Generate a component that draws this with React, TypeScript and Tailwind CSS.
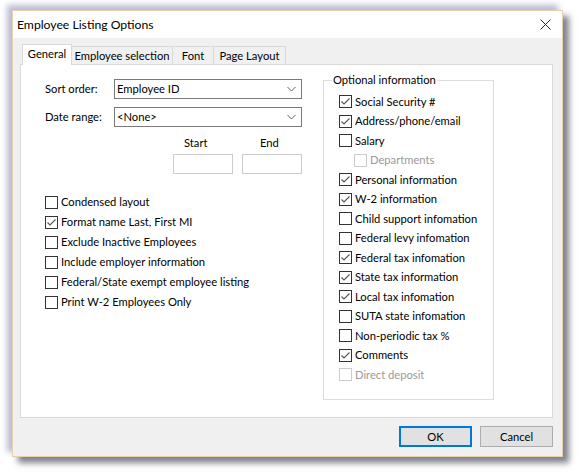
import React from "react";

const Check = ({ checked = false, disabled = false }: { checked?: boolean; disabled?: boolean }) => (
  <span
    className={
      disabled
        ? "w-[13px] h-[13px] border border-[#cccccc] bg-white flex items-center justify-center shrink-0"
        : "w-[13px] h-[13px] border border-[#333333] bg-white flex items-center justify-center shrink-0"
    }
  >
    {checked && (
      <svg width="11" height="11" viewBox="0 0 11 11">
        <path d="M1.5 5.5 L4 8 L9.5 2.5" stroke="#555555" strokeWidth="1.1" fill="none" />
      </svg>
    )}
  </span>
);

const Row = ({
  label,
  checked = false,
  disabled = false,
  indent = false,
  h = "left",
}: {
  label: string;
  checked?: boolean;
  disabled?: boolean;
  indent?: boolean;
  h?: "left" | "right";
}) => (
  <div
    className={
      (h === "left" ? "h-[20px] " : "h-[19.5px] ") +
      "flex items-center gap-[3px] text-[11.2px] leading-[14px] whitespace-nowrap " +
      (indent ? "pl-[15px] " : "") +
      (disabled ? "text-[#9a9a9a]" : "text-black")
    }
  >
    <Check checked={checked} disabled={disabled} />
    <span>{label}</span>
  </div>
);

const Chevron = () => (
  <svg width="9" height="6" viewBox="0 0 9 6">
    <path d="M0.5 1 L4.5 5 L8.5 1" stroke="#606060" strokeWidth="1" fill="none" />
  </svg>
);

const Combo = ({ value }: { value: string }) => (
  <div className="w-[188px] h-[20px] border border-[#7a7a7a] bg-white flex items-center justify-between pl-[2px] pr-[5px] text-[11.2px] leading-[14px]">
    <span>{value}</span>
    <Chevron />
  </div>
);

export default function App() {
  return (
    <div className="w-[585px] h-[475px] bg-white overflow-hidden pl-[12px] pt-[10px] font-['Lato','Liberation_Sans',sans-serif] text-black">
      <div className="w-[551px] h-[447px] border border-[#e6d0ae] flex flex-col shadow-[-5px_-5px_6px_rgba(140,140,185,0.6),6px_6px_6px_rgba(90,90,105,0.75)]">
        {/* Title bar */}
        <div className="h-[27px] bg-white flex items-center justify-between pl-[4px] pr-[11px]">
          <span className="text-[12.2px] leading-[16px]">Employee Listing Options</span>
          <svg width="11" height="11" viewBox="0 0 11 11">
            <path d="M0.5 0.5 L10.5 10.5 M10.5 0.5 L0.5 10.5" stroke="#222222" strokeWidth="1" fill="none" />
          </svg>
        </div>

        {/* Body */}
        <div className="flex-1 bg-[#f0f0f0] pl-[7px] pr-[9px] pt-[6px] flex flex-col">
          {/* Tabs */}
          <div className="h-[20px] flex items-end pl-[2px] text-[11.2px] leading-[14px] whitespace-nowrap">
            <div className="relative z-10 h-[21px] mb-[-1px] w-[50px] bg-white border-l border-t border-r border-[#d9d9d9] flex items-center justify-center pb-[2px]">
              General
            </div>
            <div className="h-[18px] w-[101px] bg-[#f0f0f0] border-t border-r border-[#d9d9d9] flex items-center justify-center">
              Employee selection
            </div>
            <div className="h-[18px] w-[41px] bg-[#f0f0f0] border-t border-r border-[#d9d9d9] flex items-center justify-center">
              Font
            </div>
            <div className="h-[18px] w-[72px] bg-[#f0f0f0] border-t border-r border-[#d9d9d9] flex items-center justify-center">
              Page Layout
            </div>
          </div>

          {/* Panel */}
          <div className="h-[354px] bg-white border border-[#d9d9d9] flex">
            <div className="w-[302px] pl-[24px] pt-[14px] flex flex-col">
              <div className="h-[20px] flex items-center text-[11.2px] leading-[14px]">
                <span className="w-[69px]">Sort order:</span>
                <Combo value="Employee ID" />
              </div>
              <div className="mt-[8px] h-[20px] flex items-center text-[11.2px] leading-[14px]">
                <span className="w-[69px]">Date range:</span>
                <Combo value="<None>" />
              </div>
              <div className="mt-[10px] h-[12px] flex items-center text-[11.2px] leading-[12px]">
                <span className="ml-[139px] w-[76px]">Start</span>
                <span>End</span>
              </div>
              <div className="mt-[5px] flex">
                <div className="ml-[128px] w-[60px] h-[20px] border border-[#cccccc] bg-white" />
                <div className="ml-[9px] w-[60px] h-[20px] border border-[#cccccc] bg-white" />
              </div>
              <div className="mt-[18px] flex flex-col">
                <Row label="Condensed layout" />
                <Row label="Format name Last, First MI" checked />
                <Row label="Exclude Inactive Employees" />
                <Row label="Include employer information" />
                <Row label="Federal/State exempt employee listing" />
                <Row label="Print W-2 Employees Only" />
              </div>
            </div>

            <fieldset className="mt-[8px] w-[171px] h-[327px] border border-[#dcdcdc] px-0 m-0">
              <legend className="ml-[8px] px-[1px] text-[11.2px] leading-[14px]">Optional information</legend>
              <div className="pt-[5px] pl-[15px] flex flex-col">
                <Row h="right" label="Social Security #" checked />
                <Row h="right" label="Address/phone/email" checked />
                <Row h="right" label="Salary" />
                <Row h="right" label="Departments" disabled indent />
                <Row h="right" label="Personal information" checked />
                <Row h="right" label="W-2 information" checked />
                <Row h="right" label="Child support infomation" />
                <Row h="right" label="Federal levy infomation" />
                <Row h="right" label="Federal tax infomation" checked />
                <Row h="right" label="State tax information" checked />
                <Row h="right" label="Local tax infomation" checked />
                <Row h="right" label="SUTA state infomation" />
                <Row h="right" label="Non-periodic tax %" />
                <Row h="right" label="Comments" checked />
                <Row h="right" label="Direct deposit" disabled />
              </div>
            </fieldset>
          </div>

          {/* Buttons */}
          <div className="mt-[8px] flex justify-end gap-[8px] text-[11.2px] leading-[14px]">
            <button className="w-[73px] h-[21px] bg-[#e1e1e1] border-2 border-[#0078d7] flex items-center justify-center">
              OK
            </button>
            <button className="w-[73px] h-[21px] bg-[#e1e1e1] border border-[#adadad] flex items-center justify-center">
              Cancel
            </button>
          </div>
        </div>
      </div>
    </div>
  );
}
